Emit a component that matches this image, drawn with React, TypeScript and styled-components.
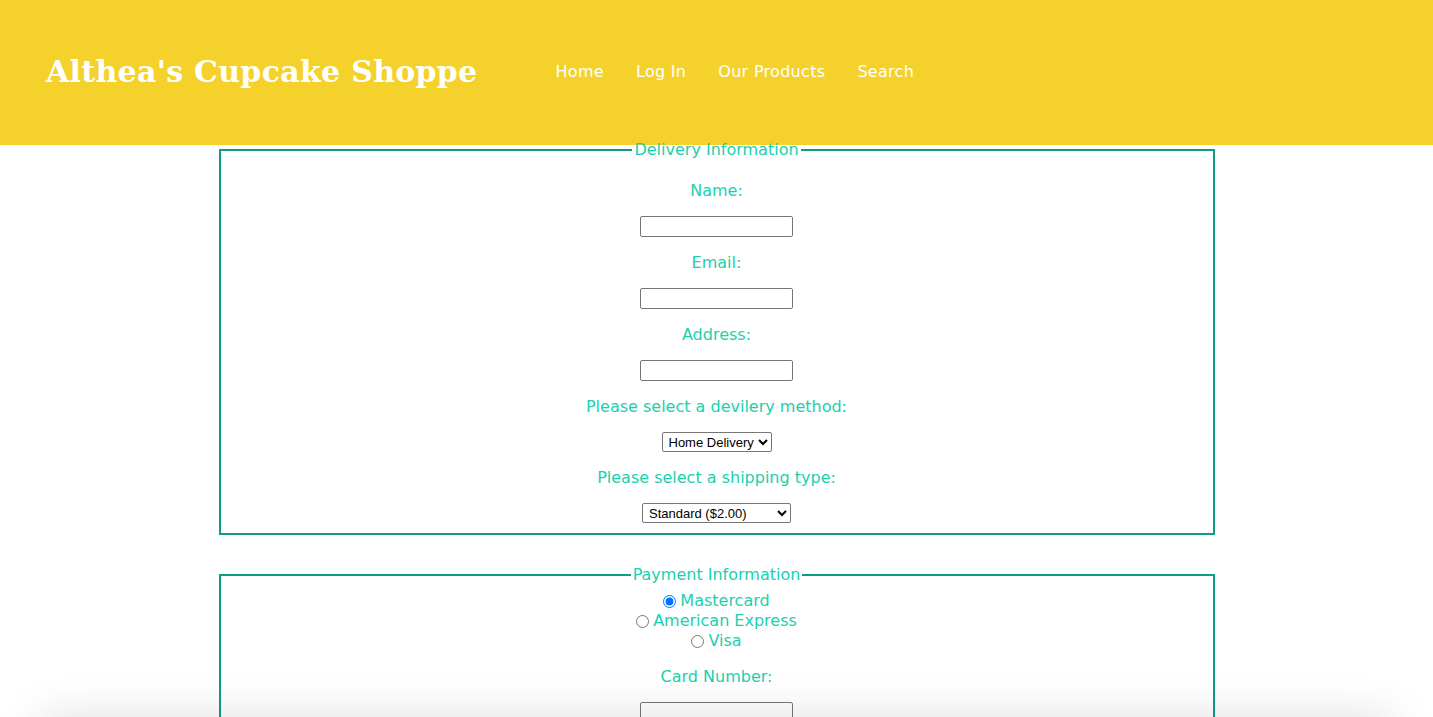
import React from "react";
import styled, { createGlobalStyle } from "styled-components";

const Global = createGlobalStyle`
  html, body { margin: 0; padding: 0; background: #fff; }
  body { font-family: "DejaVu Sans", "Noto Sans", sans-serif; }
`;

const Header = styled.header`
  height: 145px;
  background: #f5d22b;
  display: flex;
  align-items: center;
  padding-left: 46px;
  padding-bottom: 2px;
  box-sizing: border-box;
`;

const Title = styled.h1`
  margin: 0 78px 0 0;
  font-family: "DejaVu Serif", "Liberation Serif", serif;
  font-weight: bold;
  font-size: 30px;
  color: #fff;
  letter-spacing: 0.3px;
`;

const Nav = styled.nav`
  display: flex;
  gap: 32px;
`;

const NavLink = styled.a`
  color: #fff;
  font-size: 16px;
  letter-spacing: 0.3px;
  text-decoration: none;
`;

const Main = styled.main`
  display: flex;
  flex-direction: column;
  align-items: center;
  gap: 30px;
  margin-top: -5px;
  padding-bottom: 60px;
`;

const Fieldset = styled.fieldset`
  width: 996px;
  box-sizing: border-box;
  margin: 0;
  border: 2px solid #0c9d88;
  padding: 5px 10px 10px;
  text-align: center;
  color: #1ad0ae;
  font-size: 16px;
`;

const Legend = styled.legend`
  margin: 0 auto;
  padding: 0 2px;
  line-height: 20px;
  color: #1ad0ae;
`;

const Label = styled.label`
  display: block;
  line-height: 19px;
  margin: 16px 0;
`;

const TextInput = styled.input`
  display: block;
  margin: 0 auto;
  width: 153px;
  height: 21px;
  box-sizing: border-box;
  border: 1px solid #767676;
  border-radius: 2px;
`;

const Select = styled.select<{ $w: number }>`
  display: block;
  margin: 0 auto;
  width: ${(p) => p.$w}px;
  height: 20px;
  box-sizing: border-box;
  font-family: "Liberation Sans", Arial, sans-serif;
  font-size: 13px;
  color: #000;
  background: #fff;
  border: 1px solid #767676;
  border-radius: 2px;
  padding: 0 0 0 2px;
`;

const RadioGroup = styled.div`
  line-height: 20px;
  margin-top: 1px;
`;

const RadioRow = styled.div`
  display: flex;
  justify-content: center;
  align-items: center;
`;

const Radio = styled.input`
  margin: 0 4px 0 0;
  width: 13px;
  height: 13px;
`;

const BottomShade = styled.div`
  position: fixed;
  left: 40px;
  right: 40px;
  bottom: -60px;
  height: 60px;
  box-shadow: 0 0 45px rgba(0, 0, 0, 0.13);
  background: #eee;
  pointer-events: none;
`;

export default function App() {
  return (
    <>
      <Global />
      <Header>
        <Title>Althea's Cupcake Shoppe</Title>
        <Nav>
          <NavLink href="#">Home</NavLink>
          <NavLink href="#">Log In</NavLink>
          <NavLink href="#">Our Products</NavLink>
          <NavLink href="#">Search</NavLink>
        </Nav>
      </Header>
      <Main>
        <Fieldset>
          <Legend>Delivery Information</Legend>
          <Label htmlFor="name">Name:</Label>
          <TextInput id="name" type="text" />
          <Label htmlFor="email">Email:</Label>
          <TextInput id="email" type="text" />
          <Label htmlFor="address">Address:</Label>
          <TextInput id="address" type="text" />
          <Label htmlFor="method">Please select a devilery method:</Label>
          <Select id="method" $w={110} defaultValue="home">
            <option value="home">Home Delivery</option>
            <option value="pickup">Pick Up</option>
          </Select>
          <Label htmlFor="ship">Please select a shipping type:</Label>
          <Select id="ship" $w={149} defaultValue="std">
            <option value="std">Standard ($2.00)</option>
            <option value="exp">Express ($5.00)</option>
          </Select>
        </Fieldset>
        <Fieldset>
          <Legend>Payment Information</Legend>
          <RadioGroup>
            <RadioRow>
              <Radio type="radio" name="card" id="mc" defaultChecked />
              <label htmlFor="mc">Mastercard</label>
            </RadioRow>
            <RadioRow>
              <Radio type="radio" name="card" id="amex" />
              <label htmlFor="amex">American Express</label>
            </RadioRow>
            <RadioRow>
              <Radio type="radio" name="card" id="visa" />
              <label htmlFor="visa">Visa</label>
            </RadioRow>
          </RadioGroup>
          <Label htmlFor="card">Card Number:</Label>
          <TextInput id="card" type="text" />
          <Label htmlFor="exp">Expiration Date:</Label>
          <TextInput id="exp" type="text" />
        </Fieldset>
      </Main>
      <BottomShade />
    </>
  );
}
